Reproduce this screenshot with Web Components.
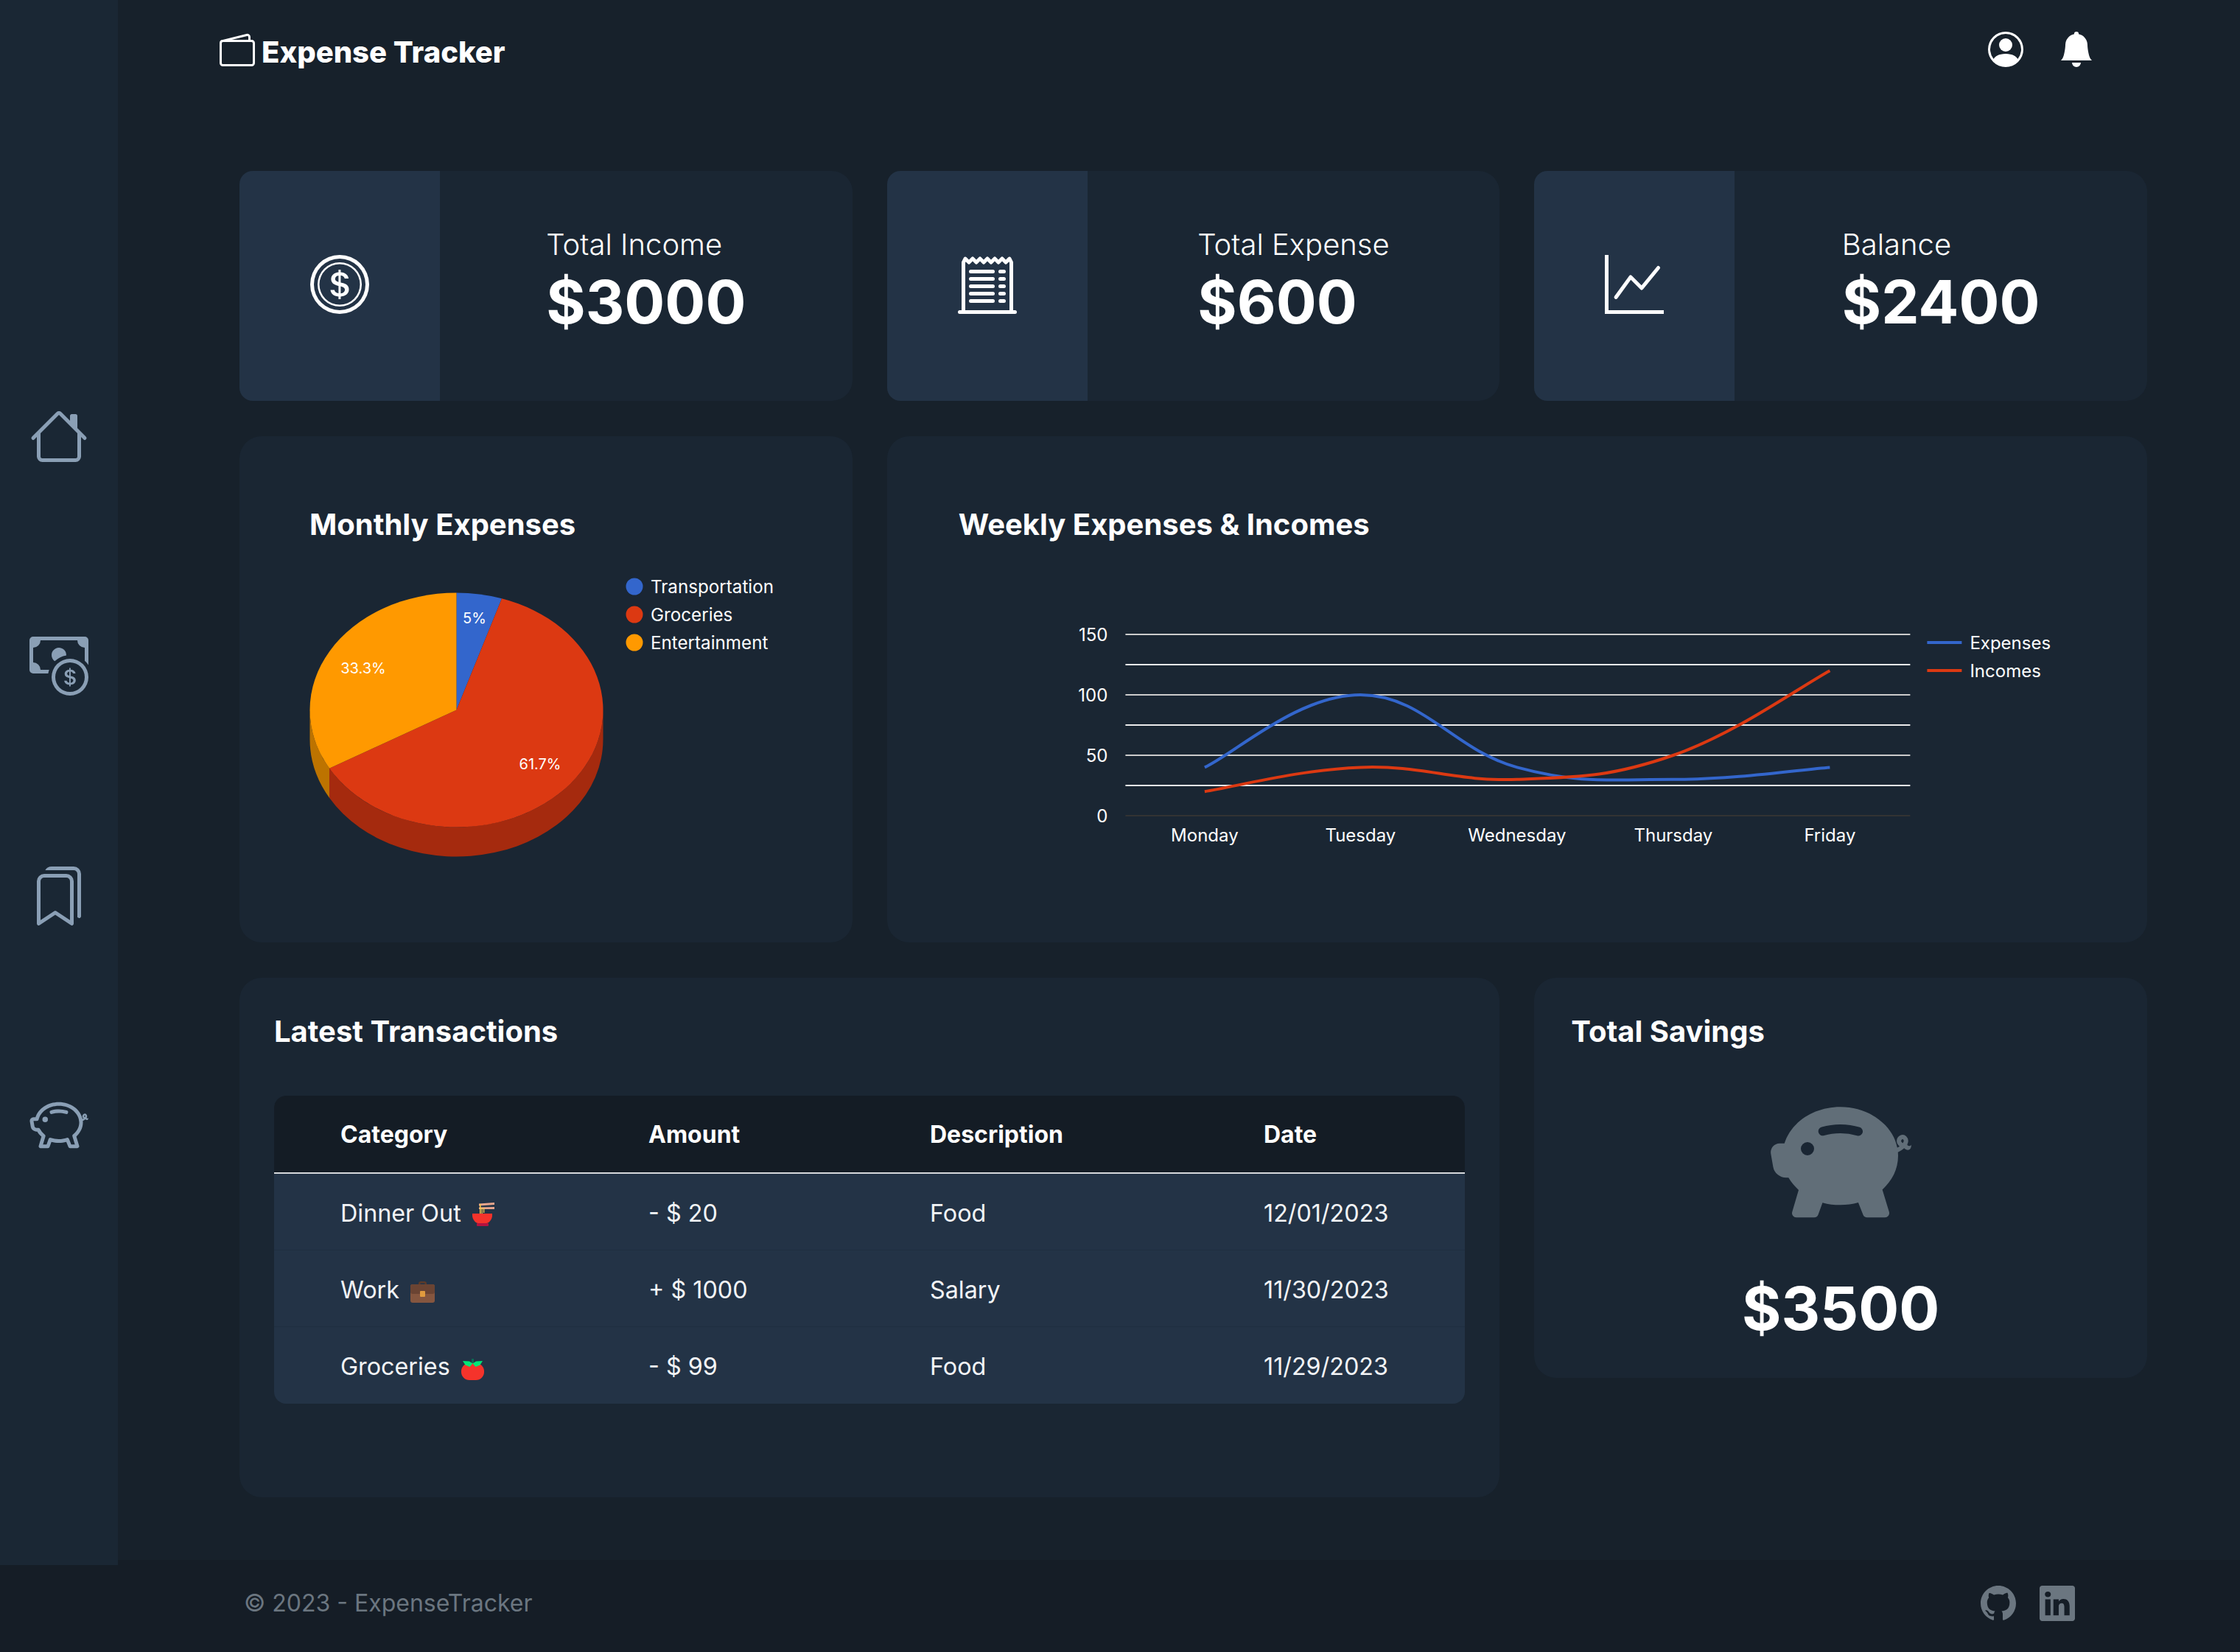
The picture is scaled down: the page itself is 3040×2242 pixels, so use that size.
<!DOCTYPE html>
<html lang="en">
<head>
<meta charset="utf-8">
<title>Expense Tracker</title>
<style>
    html, body { margin: 0; background: #17212b; }
    body { font-family: Inter, "Liberation Sans", sans-serif; color: #fff; }
</style>
</head>
<body>

<et-app>
    <et-sidebar slot="side"></et-sidebar>
    <et-topbar slot="top"></et-topbar>

    <et-stat label="Total Income" value="$3000" icon="coin"></et-stat>
    <et-stat label="Total Expense" value="$600" icon="receipt"></et-stat>
    <et-stat label="Balance" value="$2400" icon="graph"></et-stat>

    <et-panel heading="Monthly Expenses" pad="95" top="92"><et-pie></et-pie></et-panel>
    <et-panel heading="Weekly Expenses &amp; Incomes" pad="97" top="92" class="wide"><et-linechart></et-linechart></et-panel>

    <et-panel heading="Latest Transactions" pad="47" top="45" class="wide">
        <et-transactions></et-transactions>
    </et-panel>
    <et-panel heading="Total Savings" pad="50" top="45" class="short"><et-savings></et-savings></et-panel>

    <et-footer slot="foot"></et-footer>
</et-app>

<script>
    const ICONS = {
        wallet: '<path d="M12.136.326A1.5 1.5 0 0 1 14 1.78V3h.5A1.5 1.5 0 0 1 16 4.5v9a1.5 1.5 0 0 1-1.5 1.5h-13A1.5 1.5 0 0 1 0 13.5v-9a1.5 1.5 0 0 1 1.432-1.499L12.136.326zM5.562 3H13V1.78a.5.5 0 0 0-.621-.484L5.562 3zM1.5 4a.5.5 0 0 0-.5.5v9a.5.5 0 0 0 .5.5h13a.5.5 0 0 0 .5-.5v-9a.5.5 0 0 0-.5-.5h-13z"/>',
        person: '<path d="M11 6a3 3 0 1 1-6 0 3 3 0 0 1 6 0z"/><path fill-rule="evenodd" d="M0 8a8 8 0 1 1 16 0A8 8 0 0 1 0 8zm8-7a7 7 0 0 0-5.468 11.37C3.242 11.226 4.805 10 8 10s4.757 1.225 5.468 2.37A7 7 0 0 0 8 1z"/>',
        bell: '<path d="M8 16a2 2 0 0 0 2-2H6a2 2 0 0 0 2 2zm.995-14.901a1 1 0 1 0-1.99 0A5.002 5.002 0 0 0 3 6c0 1.098-.5 6-2 7h14c-1.5-1-2-5.902-2-7 0-2.42-1.72-4.44-4.005-4.901z"/>',
        coin: '<path d="M5.5 9.511c.076.954.83 1.697 2.182 1.785V12h.6v-.709c1.4-.098 2.218-.846 2.218-1.932 0-.987-.626-1.496-1.745-1.76l-.473-.112V5.57c.6.068.982.396 1.074.85h1.052c-.076-.919-.864-1.638-2.126-1.716V4h-.6v.719c-1.195.117-2.01.836-2.01 1.853 0 .9.606 1.472 1.613 1.707l.397.098v2.034c-.615-.093-1.022-.43-1.114-.9H5.5zm2.177-2.166c-.59-.137-.91-.416-.91-.836 0-.47.345-.822.915-.925v1.76h-.005zm.692 1.193c.717.166 1.048.435 1.048.91 0 .542-.412.914-1.135 1.017V8.5l.087.038z"/><path d="M8 15A7 7 0 1 1 8 1a7 7 0 0 1 0 14zm0 1A8 8 0 1 0 8 0a8 8 0 0 0 0 16z"/><path d="M8 13.5a5.5 5.5 0 1 1 0-11 5.5 5.5 0 0 1 0 11zm0 .5A6 6 0 1 0 8 2a6 6 0 0 0 0 12z"/>',
        receipt: '<path d="M3 4.5a.5.5 0 0 1 .5-.5h6a.5.5 0 1 1 0 1h-6a.5.5 0 0 1-.5-.5zm0 2a.5.5 0 0 1 .5-.5h6a.5.5 0 1 1 0 1h-6a.5.5 0 0 1-.5-.5zm0 2a.5.5 0 0 1 .5-.5h6a.5.5 0 1 1 0 1h-6a.5.5 0 0 1-.5-.5zm0 2a.5.5 0 0 1 .5-.5h6a.5.5 0 0 1 0 1h-6a.5.5 0 0 1-.5-.5zm0 2a.5.5 0 0 1 .5-.5h6a.5.5 0 0 1 0 1h-6a.5.5 0 0 1-.5-.5zM11.5 4a.5.5 0 0 0 0 1h1a.5.5 0 0 0 0-1h-1zm0 2a.5.5 0 0 0 0 1h1a.5.5 0 0 0 0-1h-1zm0 2a.5.5 0 0 0 0 1h1a.5.5 0 0 0 0-1h-1zm0 2a.5.5 0 0 0 0 1h1a.5.5 0 0 0 0-1h-1zm0 2a.5.5 0 0 0 0 1h1a.5.5 0 0 0 0-1h-1z"/><path d="M2.354.646a.5.5 0 0 0-.801.13l-.5 1A.5.5 0 0 0 1 2v13H.5a.5.5 0 0 0 0 1h15a.5.5 0 0 0 0-1H15V2a.5.5 0 0 0-.053-.224l-.5-1a.5.5 0 0 0-.8-.13L13 1.293l-.646-.647a.5.5 0 0 0-.708 0L11 1.293l-.646-.647a.5.5 0 0 0-.708 0L9 1.293 8.354.646a.5.5 0 0 0-.708 0L7 1.293 6.354.646a.5.5 0 0 0-.708 0L5 1.293 4.354.646a.5.5 0 0 0-.708 0L3 1.293 2.354.646zm-.217 1.198.51.51a.5.5 0 0 0 .707 0L4 1.707l.646.647a.5.5 0 0 0 .708 0L6 1.707l.646.647a.5.5 0 0 0 .708 0L8 1.707l.646.647a.5.5 0 0 0 .708 0L10 1.707l.646.647a.5.5 0 0 0 .708 0L12 1.707l.646.647a.5.5 0 0 0 .708 0l.509-.51.137.274V15H2V2.118l.137-.274z"/>',
        graph: '<path fill-rule="evenodd" d="M0 0h1v15h15v1H0V0Zm14.817 3.113a.5.5 0 0 1 .07.704l-4.5 5.5a.5.5 0 0 1-.74.037L7.06 6.767l-3.656 5.027a.5.5 0 0 1-.808-.588l4-5.5a.5.5 0 0 1 .758-.06l2.609 2.61 4.15-5.073a.5.5 0 0 1 .704-.07Z"/>',
        house: '<path d="M8.707 1.5a1 1 0 0 0-1.414 0L.646 8.146a.5.5 0 0 0 .708.708L2 8.207V13.5A1.5 1.5 0 0 0 3.5 15h9a1.5 1.5 0 0 0 1.5-1.5V8.207l.646.647a.5.5 0 0 0 .708-.708L13 5.793V2.5a.5.5 0 0 0-.5-.5h-1a.5.5 0 0 0-.5.5v1.293L8.707 1.5ZM13 7.207V13.5a.5.5 0 0 1-.5.5h-9a.5.5 0 0 1-.5-.5V7.207l5-5 5 5Z"/>',
        cash: '<path fill-rule="evenodd" d="M11 15a4 4 0 1 0 0-8 4 4 0 0 0 0 8zm5-4a5 5 0 1 1-10 0 5 5 0 0 1 10 0z"/><path d="M9.438 11.944c.047.596.518 1.06 1.363 1.116v.44h.375v-.443c.875-.061 1.386-.529 1.386-1.207 0-.618-.39-.936-1.09-1.1l-.296-.07v-1.2c.376.043.614.248.671.532h.658c-.047-.575-.54-1.024-1.329-1.073V8.5h-.375v.45c-.747.073-1.255.522-1.255 1.158 0 .562.378.92 1.007 1.066l.248.061v1.272c-.384-.058-.639-.27-.696-.563h-.668zm1.36-1.354c-.369-.085-.569-.26-.569-.522 0-.294.216-.514.572-.578v1.1h-.003zm.432.746c.449.104.655.272.655.569 0 .339-.257.571-.709.635v-1.195l.054.012z"/><path d="M1 0a1 1 0 0 0-1 1v8a1 1 0 0 0 1 1h4.083c.058-.344.145-.678.258-1H3a2 2 0 0 0-2-2V3a2 2 0 0 0 2-2h10a2 2 0 0 0 2 2v3.528c.38.34.717.728 1 1.154V1a1 1 0 0 0-1-1H1z"/><path d="M9.998 5.083 10 5a2 2 0 1 0-3.132 1.65 5.982 5.982 0 0 1 3.13-1.567z"/>',
        bookmarks: '<path d="M2 4a2 2 0 0 1 2-2h6a2 2 0 0 1 2 2v11.5a.5.5 0 0 1-.777.416L7 13.101l-4.223 2.815A.5.5 0 0 1 2 15.5V4zm2-1a1 1 0 0 0-1 1v10.566l3.723-2.482a.5.5 0 0 1 .554 0L11 14.566V4a1 1 0 0 0-1-1H4z"/><path d="M4.268 1H12a1 1 0 0 1 1 1v11.768l.223.148A.5.5 0 0 0 14 13.5V2a2 2 0 0 0-2-2H6a2 2 0 0 0-1.732 1z"/>',
        piggy: '<path d="M5 6.25a.75.75 0 1 1-1.5 0 .75.75 0 0 1 1.5 0zm1.138-1.496A6.613 6.613 0 0 1 7.964 4.5c.666 0 1.303.097 1.893.273a.5.5 0 0 0 .286-.958A7.602 7.602 0 0 0 7.964 3.5c-.734 0-1.441.103-2.102.292a.5.5 0 1 0 .276.962z"/><path fill-rule="evenodd" d="M7.964 1.527c-2.977 0-5.571 1.704-6.32 4.125h-.55A1 1 0 0 0 .11 6.824l.254 1.46a1.5 1.5 0 0 0 1.478 1.243h.263c.3.513.688.978 1.145 1.382l-.729 2.477a.5.5 0 0 0 .48.641h2a.5.5 0 0 0 .471-.332l.482-1.351c.635.173 1.31.267 2.011.267.707 0 1.388-.095 2.028-.272l.543 1.372a.5.5 0 0 0 .465.316h2a.5.5 0 0 0 .478-.645l-.761-2.506C13.81 9.895 14.5 8.559 14.5 7.069c0-.145-.007-.29-.02-.431.261-.11.508-.266.705-.444.315.306.815.306.815-.417 0 .223-.5.223-.461-.026a.95.95 0 0 0 .09-.255.7.7 0 0 0-.202-.645.58.58 0 0 0-.707-.098.735.735 0 0 0-.375.562c-.024.243.082.48.32.654a2.112 2.112 0 0 1-.259.153c-.534-2.664-3.284-4.595-6.442-4.595zM2.516 6.26c.455-2.066 2.667-3.733 5.448-3.733 3.146 0 5.536 2.114 5.536 4.542 0 1.254-.624 2.41-1.67 3.248a.5.5 0 0 0-.165.535l.66 2.175h-.985l-.59-1.487a.5.5 0 0 0-.629-.288c-.661.23-1.39.359-2.157.359a6.558 6.558 0 0 1-2.157-.359.5.5 0 0 0-.635.304l-.525 1.471h-.979l.633-2.15a.5.5 0 0 0-.17-.534 4.649 4.649 0 0 1-1.284-1.541.5.5 0 0 0-.446-.275h-.56a.5.5 0 0 1-.492-.414l-.254-1.46h.933a.5.5 0 0 0 .488-.393zm12.621-.857a.565.565 0 0 1-.098.21.704.704 0 0 1-.044-.025c-.146-.09-.157-.175-.152-.223a.236.236 0 0 1 .117-.173c.049-.027.08-.021.113.012a.202.202 0 0 1 .064.199z"/>',
        piggyfill: '<path d="M7.964 1.527c-2.977 0-5.571 1.704-6.32 4.125h-.55A1 1 0 0 0 .11 6.824l.254 1.46a1.5 1.5 0 0 0 1.478 1.243h.263c.3.513.688.978 1.145 1.382l-.729 2.477a.5.5 0 0 0 .48.641h2a.5.5 0 0 0 .471-.332l.482-1.351c.635.173 1.31.267 2.011.267.707 0 1.388-.095 2.028-.272l.543 1.372a.5.5 0 0 0 .465.316h2a.5.5 0 0 0 .478-.645l-.761-2.506C13.81 9.895 14.5 8.559 14.5 7.069c0-.145-.007-.29-.02-.431.261-.11.508-.266.705-.444.315.306.815.306.815-.417 0 .223-.5.223-.461-.026a.95.95 0 0 0 .09-.255.7.7 0 0 0-.202-.645.58.58 0 0 0-.707-.098.735.735 0 0 0-.375.562c-.024.243.082.48.32.654a2.112 2.112 0 0 1-.259.153c-.534-2.664-3.284-4.595-6.442-4.595Zm7.173 3.876a.565.565 0 0 1-.098.21.704.704 0 0 1-.044-.025c-.146-.09-.157-.175-.152-.223a.236.236 0 0 1 .117-.173c.049-.027.08-.021.113.012a.202.202 0 0 1 .064.199Zm-8.999-.65a.5.5 0 1 1-.276-.96A7.613 7.613 0 0 1 7.964 3.5c.763 0 1.497.11 2.18.315a.5.5 0 1 1-.287.958A6.602 6.602 0 0 0 7.964 4.5c-.64 0-1.255.09-1.826.254ZM5 6.25a.75.75 0 1 1-1.5 0 .75.75 0 0 1 1.5 0Z"/>',
        github: '<path d="M8 0C3.58 0 0 3.58 0 8c0 3.54 2.29 6.53 5.47 7.59.4.07.55-.17.55-.38 0-.19-.01-.82-.01-1.49-2.01.37-2.53-.49-2.69-.94-.09-.23-.48-.94-.82-1.13-.28-.15-.68-.52-.01-.53.63-.01 1.08.58 1.23.82.72 1.21 1.87.87 2.33.66.07-.52.28-.87.51-1.07-1.78-.2-3.64-.89-3.64-3.95 0-.87.31-1.59.82-2.15-.08-.2-.36-1.02.08-2.12 0 0 .67-.21 2.2.82.64-.18 1.32-.27 2-.27.68 0 1.36.09 2 .27 1.53-1.04 2.2-.82 2.2-.82.44 1.1.16 1.92.08 2.12.51.56.82 1.27.82 2.15 0 3.07-1.87 3.75-3.65 3.95.29.25.54.73.54 1.48 0 1.07-.01 1.93-.01 2.2 0 .21.15.46.55.38A8.012 8.012 0 0 0 16 8c0-4.42-3.58-8-8-8z"/>',
        linkedin: '<path d="M0 1.146C0 .513.526 0 1.175 0h13.65C15.474 0 16 .513 16 1.146v13.708c0 .633-.526 1.146-1.175 1.146H1.175C.526 16 0 15.487 0 14.854V1.146zm4.943 12.248V6.169H2.542v7.225h2.401zm-1.2-8.212c.837 0 1.358-.554 1.358-1.248-.015-.709-.52-1.248-1.342-1.248-.822 0-1.359.54-1.359 1.248 0 .694.521 1.248 1.327 1.248h.016zm4.908 8.212V9.359c0-.216.016-.432.08-.586.173-.431.568-.878 1.232-.878.869 0 1.216.662 1.216 1.634v3.865h2.401V9.25c0-2.22-1.184-3.252-2.764-3.252-1.274 0-1.845.7-2.165 1.193v.025h-.016a5.54 5.54 0 0 1 .016-.025V6.169h-2.4c.03.678 0 7.225 0 7.225h2.4z"/>'
    }

    class EtElement extends HTMLElement {
        render(html){
            if (!this.shadowRoot) this.attachShadow({ mode: 'open' })
            this.shadowRoot.innerHTML = html
        }
    }

    class EtIcon extends EtElement {
        connectedCallback(){
            const size = this.getAttribute('size') || 80
            this.render(`
                <style>
                    :host{ display: block; width: ${size}px; height: ${size}px; color: inherit; }
                    svg{ display: block; width: 100%; height: 100%; fill: currentColor; }
                </style>
                <svg viewBox="0 0 16 16">${ICONS[this.getAttribute('name')]}</svg>`)
        }
    }
    customElements.define('et-icon', EtIcon)

    class EtApp extends EtElement {
        connectedCallback(){
            this.render(`
                <style>
                    :host{
                        display: grid;
                        grid-template-columns: 160px 1fr;
                        grid-template-rows: 2117px 125px;
                        width: 3040px;
                        height: 2242px;
                        overflow: hidden;
                    }
                    #side{ grid-column: 1; grid-row: 1; height: 2124px; position: relative; z-index: 1; }
                    main{ grid-column: 2; grid-row: 1; display: flex; flex-direction: column; min-width: 0; }
                    #cards{
                        display: grid;
                        grid-template-columns: repeat(3, 1fr);
                        grid-template-rows: 312px 687px 705px;
                        gap: 48px 47px;
                        margin: 0 126px 0 165px;
                    }
                    ::slotted(.wide){ grid-column: span 2; }
                    ::slotted(.short){ align-self: start; height: 543px; }
                    #foot{ grid-column: 1 / -1; grid-row: 2; }
                </style>
                <div id=side><slot name=side></slot></div>
                <main>
                    <slot name=top></slot>
                    <div id=cards><slot></slot></div>
                </main>
                <div id=foot><slot name=foot></slot></div>`)
        }
    }
    customElements.define('et-app', EtApp)

    class EtSidebar extends EtElement {
        connectedCallback(){
            this.render(`
                <style>
                    :host{
                        display: flex;
                        flex-direction: column;
                        align-items: center;
                        gap: 232px;
                        height: 100%;
                        box-sizing: border-box;
                        padding-top: 552px;
                        background: #1a2734;
                        color: #8a9fb5;
                    }
                </style>
                <et-icon name=house></et-icon>
                <et-icon name=cash></et-icon>
                <et-icon name=bookmarks></et-icon>
                <et-icon name=piggy></et-icon>`)
        }
    }
    customElements.define('et-sidebar', EtSidebar)

    class EtTopbar extends EtElement {
        connectedCallback(){
            this.render(`
                <style>
                    :host{
                        display: flex;
                        align-items: flex-start;
                        height: 232px;
                        box-sizing: border-box;
                        padding: 43px 198px 0 138px;
                    }
                    #brand{
                        display: flex;
                        align-items: center;
                        gap: 9px;
                        flex: 1;
                        font: 800 40px/48px Inter, sans-serif;
                    }
                    #brand span{ margin-top: 4px; }
                    #tools{ display: flex; gap: 48px; }
                </style>
                <div id=brand><et-icon name=wallet size=48></et-icon><span>Expense Tracker</span></div>
                <div id=tools>
                    <et-icon name=person size=48></et-icon>
                    <et-icon name=bell size=48></et-icon>
                </div>`)
        }
    }
    customElements.define('et-topbar', EtTopbar)

    class EtStat extends EtElement {
        connectedCallback(){
            this.render(`
                <style>
                    :host{
                        display: flex;
                        background: #1a2633;
                        border-radius: 28px;
                    }
                    #pic{
                        width: 272px;
                        flex: none;
                        box-sizing: border-box;
                        padding-bottom: 4px;
                        display: flex;
                        align-items: center;
                        justify-content: center;
                        background: #233346;
                        border-radius: 18px 0 0 18px;
                    }
                    #txt{ flex: 1; display: flex; justify-content: center; align-items: center; padding-bottom: 8px; }
                    #label{ font-size: 40px; font-weight: 300; line-height: 48px; }
                    #value{ font-size: 81.6px; font-weight: 700; line-height: 100px; margin-top: 4px; }
                </style>
                <div id=pic><et-icon name="${this.getAttribute('icon')}"></et-icon></div>
                <div id=txt><div>
                    <div id=label>${this.getAttribute('label')}</div>
                    <div id=value>${this.getAttribute('value')}</div>
                </div></div>`)
        }
    }
    customElements.define('et-stat', EtStat)

    class EtPanel extends EtElement {
        connectedCallback(){
            const pad = this.getAttribute('pad'), top = this.getAttribute('top')
            this.render(`
                <style>
                    :host{
                        display: flex;
                        flex-direction: column;
                        background: #1a2633;
                        border-radius: 30px;
                        box-sizing: border-box;
                        padding: ${top}px ${pad}px 0;
                    }
                    h2{ margin: 0; font-size: 40px; line-height: 56px; font-weight: 700; }
                </style>
                <h2>${this.getAttribute('heading').replace('&', '&amp;')}</h2>
                <slot></slot>`)
        }
    }
    customElements.define('et-panel', EtPanel)

    // slice: start/end angle in degrees, clockwise from the top of the ellipse
    class EtPie extends EtElement {
        connectedCallback(){
            const cx = 619.5, cy = 963.5, rx = 199, ry = 159, depth = 40
            const pt = a => {
                const r = a * Math.PI / 180
                return [cx + rx * Math.sin(r), cy - ry * Math.cos(r)]
            }
            const slice = (a, b, fill) => {
                const [x1, y1] = pt(a), [x2, y2] = pt(b)
                return `<path fill="${fill}" d="M${cx} ${cy}L${x1} ${y1}A${rx} ${ry} 0 ${b - a > 180 ? 1 : 0} 1 ${x2} ${y2}Z"/>`
            }
            const wall = (a, b, fill) => {
                const [x1, y1] = pt(a), [x2, y2] = pt(b)
                return `<path fill="${fill}" d="M${x1} ${y1}A${rx} ${ry} 0 0 1 ${x2} ${y2}V${y2 + depth}A${rx} ${ry} 0 0 0 ${x1} ${y1 + depth}Z"/>`
            }
            const legend = [['Transportation', '#3366cc', 796], ['Groceries', '#dc3912', 834], ['Entertainment', '#ff9900', 872]]
            this.render(`
                <style>
                    :host{ display: block; margin: 30px -60px 0 0; }
                    svg{ display: block; }
                    text{ fill: #fff; font-family: Inter, sans-serif; }
                </style>
                <svg width=640 height=420 viewBox="420 770 640 420">
                    ${wall(90, 240.1, '#a52a0e')}
                    ${wall(240.1, 270, '#bd7300')}
                    ${slice(0, 18, '#3366cc')}
                    ${slice(18, 240.1, '#dc3912')}
                    ${slice(240.1, 360, '#ff9900')}
                    <text x=644 y=846 font-size=20 text-anchor=middle>5%</text>
                    <text x=493 y=914 font-size=20 text-anchor=middle>33.3%</text>
                    <text x=733 y=1044 font-size=20 text-anchor=middle>61.7%</text>
                    ${legend.map(([t, c, y]) => `<circle cx=861 cy=${y} r=11.5 fill="${c}"/><text x=883 y=${y + 8.5} font-size=24.2>${t}</text>`).join('')}
                </svg>`)
        }
    }
    customElements.define('et-pie', EtPie)

    class EtLinechart extends EtElement {
        connectedCallback(){
            const xs = [1634.5, 1846, 2058.5, 2270.5, 2483]
            const y = v => 1107 - v * 1.64
            const curve = (vals, f = 0.2) => {
                const p = vals.map((v, i) => [xs[i], y(v)])
                const t = p.map((_, i) => {
                    const a = p[Math.max(i - 1, 0)], b = p[Math.min(i + 1, p.length - 1)]
                    return [b[0] - a[0], b[1] - a[1]]
                })
                let d = `M${p[0][0]} ${p[0][1]}`
                for (let i = 0; i < p.length - 1; i++) {
                    d += `C${p[i][0] + t[i][0] * f} ${p[i][1] + t[i][1] * f} ${p[i + 1][0] - t[i + 1][0] * f} ${p[i + 1][1] - t[i + 1][1] * f} ${p[i + 1][0]} ${p[i + 1][1]}`
                }
                return d
            }
            const grid = [[150, '#ccc'], [125, '#ebebeb'], [100, '#ccc'], [75, '#ebebeb'], [50, '#ccc'], [25, '#ebebeb'], [0, '#333']]
            const days = ['Monday', 'Tuesday', 'Wednesday', 'Thursday', 'Friday']
            this.render(`
                <style>
                    :host{ display: block; margin: 50px 0 0 -97px; }
                    svg{ display: block; }
                    text{ fill: #fff; font-family: Inter, sans-serif; font-size: 24px; }
                </style>
                <svg width=1600 height=380 viewBox="1203.600 790 1600 380">
                    ${grid.map(([v, c]) => `<rect x=1527 y=${y(v) - 1} width=1065 height=2 fill="${c}"/>`).join('')}
                    ${[150, 100, 50, 0].map(v => `<text x=1503 y=${y(v) + 9} text-anchor=end>${v}</text>`).join('')}
                    ${days.map((d, i) => `<text x=${xs[i]} y=1142 text-anchor=middle>${d}</text>`).join('')}
                    <path d="${curve([40, 100, 40, 30, 40])}" fill=none stroke="#3366cc" stroke-width=4 />
                    <path d="${curve([20, 40, 30, 50, 120])}" fill=none stroke="#dc3912" stroke-width=4 />
                    <rect x=2615 y=870 width=47 height=4 fill="#3366cc"/>
                    <text x=2673 y=880.500>Expenses</text>
                    <rect x=2615 y=908 width=47 height=4 fill="#dc3912"/>
                    <text x=2673 y=918.500>Incomes</text>
                </svg>`)
        }
    }
    customElements.define('et-linechart', EtLinechart)

    const EMOJI = {
        noodles: `<svg width=30 height=32 viewBox="0 0 30 32" style="margin-top:4px">
            <path d="M9 1.500l21-1.500v3l-21 1.500zM9 6.500l21-.5v3H9z" fill="#e8a58c"/>
            <path d="M10 2h1.500v13H10zM12.500 7h1.300v8h-1.300zM15 7h1.300v7H15z" fill="#f5c84a"/>
            <path d="M0 15h27v2.500C27 23 22.500 28 19 28H8C4.500 28 0 23 0 17.500z" fill="#f5332b"/>
            <rect x=6 y=28 width=16 height=4 rx=1 fill="#b5123f"/>
        </svg>`,
        bag: `<svg width=33 height=29 viewBox="0 0 33 29" style="margin-top:7px">
            <path d="M11 5V3a3 3 0 0 1 3-3h5a3 3 0 0 1 3 3v2h-2.500V3a.5.5 0 0 0-.5-.5h-5a.5.5 0 0 0-.5.5v2z" fill="#5b3a2a"/>
            <rect y=4 width=33 height=25 rx=3 fill="#85563f"/>
            <rect y=4 width=33 height=13 rx=3 fill="#6b4433"/>
            <rect x=13 y=13 width=7 height=8 rx=1 fill="#e09a3e"/>
        </svg>`,
        tomato: `<svg width=31 height=29 viewBox="0 0 31 29" style="margin-top:7px">
            <rect x=14 y=0 width=3 height=6 fill="#0c6b54"/>
            <rect x=0 y=6 width=31 height=23 rx=11 fill="#f5332b"/>
            <path d="M2 3l9 .5 4.500 3-4 4.500-6-2.500zM29 3l-9 .5-4.500 3 4 4.500 6-2.500z" fill="#00e676"/>
        </svg>`
    }

    class EtTransactions extends EtElement {
        connectedCallback(){
            const rows = [
                ['Dinner Out', 'noodles', '- $ 20', 'Food', '12/01/2023'],
                ['Work', 'bag', '+ $ 1000', 'Salary', '11/30/2023'],
                ['Groceries', 'tomato', '- $ 99', 'Food', '11/29/2023']
            ]
            this.render(`
                <style>
                    :host{ display: block; margin-top: 59px; }
                    table{
                        width: 1616px;
                        border-collapse: separate;
                        border-spacing: 0;
                        table-layout: fixed;
                        font-size: 32.3px;
                        border-radius: 16px;
                        overflow: hidden;
                        background: #233346;
                    }
                    th, td{ padding: 0 0 0 90px; height: 104px; box-sizing: border-box; text-align: left; }
                    th{ background: #141c25; font-weight: 700; font-size: 32px; height: 106px; border-bottom: 2px solid #d6d9dc; }
                    td{ padding-top: 3px; font-weight: 400; color: #f2f4f6; border-bottom: 1px solid #1f2e40; }
                    tr:last-child td{ border-bottom: 0; }
                    .cat{ display: flex; align-items: center; gap: 15px; }
                    svg{ display: block; }
                </style>
                <table>
                    <colgroup><col style="width:418px"><col style="width:382px"><col style="width:453px"><col style="width:363px"></colgroup>
                    <thead><tr><th>Category</th><th>Amount</th><th>Description</th><th>Date</th></tr></thead>
                    <tbody>
                        ${rows.map(r => `<tr><td><div class=cat>${r[0]} ${EMOJI[r[1]]}</div></td><td>${r[2]}</td><td>${r[3]}</td><td>${r[4]}</td></tr>`).join('')}
                    </tbody>
                </table>`)
        }
    }
    customElements.define('et-transactions', EtTransactions)

    class EtSavings extends EtElement {
        connectedCallback(){
            this.render(`
                <style>
                    :host{ display: flex; flex-direction: column; align-items: center; margin-top: 56px; color: #616e78; }
                    #value{ color: #fff; font-size: 81.6px; font-weight: 700; line-height: 100px; margin-top: 50px; }
                </style>
                <et-icon name=piggyfill size=192></et-icon>
                <div id=value>$3500</div>`)
        }
    }
    customElements.define('et-savings', EtSavings)

    class EtFooter extends EtElement {
        connectedCallback(){
            this.render(`
                <style>
                    :host{
                        display: flex;
                        align-items: center;
                        height: 125px;
                        box-sizing: border-box;
                        padding: 0 224px 8px 331px;
                        background: #151d26;
                        color: #6b7680;
                    }
                    span{ flex: 1; font-size: 32px; font-weight: 400; }
                    div{ display: flex; gap: 32px; }
                </style>
                <span>© 2023 - ExpenseTracker</span>
                <div>
                    <et-icon name=github size=48></et-icon>
                    <et-icon name=linkedin size=48></et-icon>
                </div>`)
        }
    }
    customElements.define('et-footer', EtFooter)
</script>
</body>
</html>
